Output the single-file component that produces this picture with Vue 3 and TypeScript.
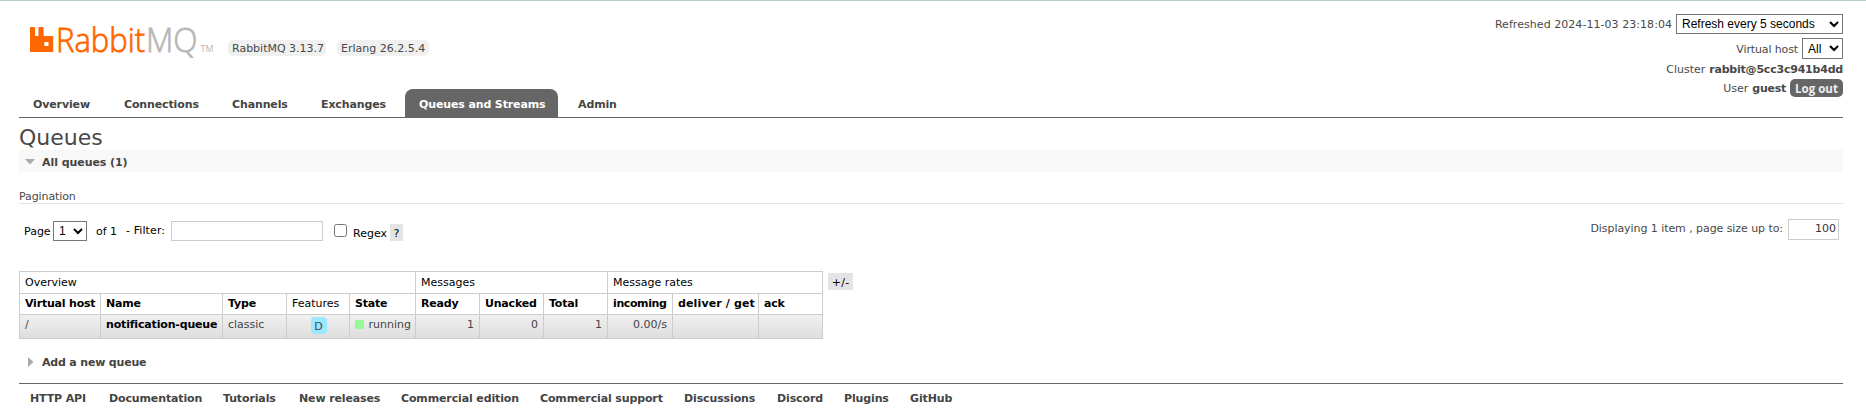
<script setup lang="ts">
import { ref } from 'vue'

interface Tab { label: string; active?: boolean }

const tabs: Tab[] = [
  { label: 'Overview' },
  { label: 'Connections' },
  { label: 'Channels' },
  { label: 'Exchanges' },
  { label: 'Queues and Streams', active: true },
  { label: 'Admin' },
]

const columns: string[] = ['Virtual host', 'Name', 'Type', 'Features', 'State', 'Ready', 'Unacked', 'Total', 'incoming', 'deliver / get', 'ack']

const footerLinks: string[] = [
  'HTTP API', 'Documentation', 'Tutorials', 'New releases', 'Commercial edition',
  'Commercial support', 'Discussions', 'Discord', 'Plugins', 'GitHub',
]

const filter = ref('')
const pageSize = ref('100')
const regex = ref(false)
</script>

<template>
  <div class="page">
    <header class="header">
      <div class="brand">
        <svg class="logo" width="190" height="60" viewBox="0 -16 190 60">
          <path class="mark" d="M.7 3H4.300q.7 0 .7.700V11.300q0 .7.700.700H7.800q.7 0 .7-.700V3.700q0-.7.700-.700H12.800q.7 0 .7.700V11.300q0 .7.700.700H22.500q.7 0 .7.700V27.300q0 .7-.7.700H.7Q0 28 0 27.300V3.700Q0 3 .7 3zM14.300 18v4h4.200v-4z" fill-rule="evenodd" />
          <text class="word rabbit" x="26" y="27.700" textLength="89" lengthAdjust="spacingAndGlyphs">Rabbit</text>
          <text class="word mq" x="116" y="27.700" textLength="51.500" lengthAdjust="spacingAndGlyphs">MQ</text>
          <text class="tm" x="170.500" y="27.700" textLength="13" lengthAdjust="spacingAndGlyphs">TM</text>
        </svg>
        <span class="pill p1">RabbitMQ 3.13.7</span>
        <span class="pill p2">Erlang 26.2.5.4</span>
      </div>
      <div class="status">
        <div class="row r1">
          <span class="t-refreshed">Refreshed 2024-11-03 23:18:04</span>
          <select class="sel-refresh"><option>Refresh every 5 seconds</option></select>
        </div>
        <div class="row r2">
          <span class="t-vhost">Virtual host</span>
          <select class="sel-vhost"><option>All</option></select>
        </div>
        <div class="row r3"><span class="t-cluster">Cluster</span><b class="t-node">rabbit@5cc3c941b4dd</b></div>
        <div class="row r4"><span class="t-user">User</span><b class="t-guest">guest</b><button class="logout">Log out</button></div>
      </div>
    </header>

    <nav class="tabs">
      <a v-for="t in tabs" :key="t.label" class="tab" :class="{ active: t.active }">{{ t.label }}</a>
    </nav>

    <h1>Queues</h1>
    <h2 class="section open">
      <svg width="10" height="6" viewBox="0 0 10 6"><path d="M0 0h10L5 5.500z" /></svg>
      <span>All queues (1)</span>
    </h2>

    <h3>Pagination</h3>
    <div class="paging">
      <div class="controls">
        <span class="t-page">Page</span>
        <select class="sel-page"><option>1</option></select>
        <span class="t-of">of 1</span>
        <span class="t-filter">- Filter:</span>
        <input v-model="filter" class="filter" type="text">
        <input v-model="regex" class="check" type="checkbox">
        <span class="t-regex">Regex</span>
        <span class="help">?</span>
      </div>
      <div class="size">
        <span class="t-size">Displaying 1 item , page size up to:</span>
        <input v-model="pageSize" class="size-input" type="text">
      </div>
    </div>

    <div class="list">
      <table>
        <colgroup><col v-for="c in columns" :key="c"></colgroup>
        <thead>
          <tr class="groups">
            <th colspan="5">Overview</th>
            <th colspan="3">Messages</th>
            <th colspan="3">Message rates</th>
          </tr>
          <tr class="names">
            <th v-for="c in columns" :key="c" :class="{ plain: c === 'Features', wide: c === 'deliver / get', tight: c === 'incoming' }">{{ c }}</th>
          </tr>
        </thead>
        <tbody>
          <tr>
            <td>/</td>
            <td><b class="queue">notification-queue</b></td>
            <td>classic</td>
            <td class="c"><span class="feature">D</span></td>
            <td><span class="state"><i></i>running</span></td>
            <td class="r">1</td>
            <td class="r">0</td>
            <td class="r">1</td>
            <td class="r rate">0.00/s</td>
            <td></td>
            <td></td>
          </tr>
        </tbody>
      </table>
      <span class="plusminus">+/-</span>
    </div>

    <h2 class="section closed">
      <svg width="6" height="10" viewBox="0 0 6 10"><path d="M0 0v10L5.500 5z" /></svg>
      <span>Add a new queue</span>
    </h2>

    <footer>
      <a v-for="l in footerLinks" :key="l">{{ l }}</a>
    </footer>
  </div>
</template>

<style>
body { margin: 0; background: #fff; }
</style>

<style scoped>
.page {
  box-sizing: border-box;
  height: 420px;
  padding: 0 23px 0 19px;
  border-top: 1px solid #b5cdc9;
  font: 11px/16px Verdana, "DejaVu Sans", sans-serif;
  color: #484848;
  white-space: nowrap;
  overflow: hidden;
}
.page * { box-sizing: border-box; }
.header { display: flex; justify-content: space-between; height: 88px; }
.brand { display: flex; align-items: flex-start; padding: 7px 0 0 11px; }
.logo { flex: none; width: 190px; margin-right: 8px; }
.mark { fill: #f60; }
.word { font: 300 33.500px "Open Sans", "Noto Sans", sans-serif; stroke-width: .8px; }
.rabbit { fill: #f60; stroke: #f60; }
.mq { fill: #b8b8b8; stroke: #b8b8b8; }
.tm { font: 9.500px "Open Sans", sans-serif; fill: #b5b5b5; }
.pill { height: 16px; margin-top: 32px; padding: 0 4px; border-radius: 5px; background: #f0f0f0; line-height: 18px; }
.p1 { width: 98px; margin-right: 11px; }
.p2 { width: 92px; }
.status { display: flex; flex-direction: column; align-items: flex-end; padding-top: 13px; }
.row { display: flex; align-items: center; gap: 4px; }
.row span, .row b { padding-top: 2px; }
.t-refreshed { letter-spacing: .05px; }
.t-vhost { letter-spacing: -.13px; }
.t-node { letter-spacing: -.21px; }
.r1 { height: 20px; margin-bottom: 4px; }
.r2 { height: 21px; margin-bottom: 2px; }
.r3 { height: 16px; margin-bottom: 2px; }
.r4 { height: 18px; }
select {
  margin: 0; padding: 0 1px; border: 1px solid #767676; border-radius: 0;
  background: #fff; color: #000; font: 12px "Liberation Sans", Arial, sans-serif;
}
.sel-refresh { width: 167px; height: 20px; }
.sel-vhost { width: 41px; height: 21px; }
.t-guest { letter-spacing: -.25px; }
.logout { width: 53px; height: 18px; padding: 1px 0 0; border: 0; border-radius: 5px; background: #666; color: #eee; font: 700 11.500px/17px "Open Sans", sans-serif; }
.tabs {
  display: grid; grid-template-columns: 85px 102px 83px 92px 153px 67px; column-gap: 6px;
  height: 29px; border-bottom: 1px solid #666;
}
.tab { height: 28px; padding: 1px 14px 0; border-radius: 8px 8px 0 0; color: #444; font-weight: bold; line-height: 30px; letter-spacing: -.13px; }
.tab.active { background: #666; color: #fff; }
h1 { height: 32px; margin: 0; font-size: 22px; font-weight: normal; line-height: 40px; }
.section { display: flex; align-items: center; height: 22px; margin: 0; font-size: 11px; color: #444; letter-spacing: -.18px; }
.section span { padding-top: 2px; }
.section svg { fill: #aaa; }
.open { padding-left: 6px; background: #f8f8f8; gap: 7px; letter-spacing: -.06px; }
.open span { padding-top: 3px; }
.open svg { margin-top: 2px; }
.closed { margin-top: 11px; padding-left: 9px; gap: 8px; }
h3 { height: 32px; margin: 0; border-bottom: 1px solid #e4e4e4; font-size: 11px; font-weight: normal; line-height: 50px; letter-spacing: -.1px; }
.paging { display: flex; justify-content: space-between; height: 67px; padding: 15px 4px 0 5px; }
.controls { display: flex; align-items: flex-start; padding-top: 2px; color: #000; }
.controls span { line-height: 20px; }
.controls .t-page, .controls .t-of { line-height: 21px; }
.t-page { width: 29px; }
.sel-page { width: 34px; height: 20px; margin-right: 9px; }
.t-of { width: 30px; }
.t-filter { width: 45px; letter-spacing: .1px; }
input[type='text'] { height: 21px; margin: 0; border: 1px solid #ccc; background: #fff; color: #333; font: 11px Verdana, "DejaVu Sans", sans-serif; }
input.filter[type='text'] { width: 152px; height: 20px; }
.check { width: 13px; height: 13px; margin: 3px 6px 0 11px; }
.t-regex { width: 37px; margin-top: 3px; }
.controls .help { width: 13px; height: 17px; margin-top: 3px; background: #e4e4e4; text-align: center; line-height: 19px; }
.size { display: flex; align-items: flex-start; gap: 5px; line-height: 20px; letter-spacing: -.065px; }
input.size-input[type='text'] { width: 51px; padding: 0 2px 2px; text-align: right; }
.list { display: flex; align-items: flex-start; height: 69px; }
table { width: 804px; table-layout: fixed; border-collapse: collapse; color: #000; }
col:nth-child(1) { width: 81px; }
col:nth-child(2) { width: 122px; }
col:nth-child(3) { width: 64px; }
col:nth-child(4) { width: 63px; }
col:nth-child(5) { width: 66px; }
col:nth-child(6), col:nth-child(7), col:nth-child(8) { width: 64px; }
col:nth-child(9) { width: 65px; }
col:nth-child(10) { width: 86px; }
col:nth-child(11) { width: 64px; }
th, td { padding: 0 4px 0 5px; border: 1px solid #ccc; text-align: left; vertical-align: top; }
th { padding-top: 1px; line-height: 20px; }
.groups { height: 22px; }
.groups th, .plain { font-weight: normal; }
.names { height: 21px; }
.names th { padding-top: 0; line-height: 20px; height: 21px; letter-spacing: -.2px; }
.names .wide { letter-spacing: .13px; }
.names .tight { letter-spacing: -.4px; }
.names .plain { letter-spacing: 0; }
tbody tr { height: 24px; background: linear-gradient(#f0f0f0, #ddd); color: #444; }
td { line-height: 19px; }
.queue { color: #000; letter-spacing: -.17px; }
.c { text-align: center; }
.r { padding-right: 5px; text-align: right; }
.feature { display: block; width: 16px; height: 17px; margin: 2px auto 0; border-radius: 4px; background: #98e8ff; line-height: 19px; }
.state { display: flex; align-items: center; gap: 5px; }
.state i { width: 9px; height: 9px; background: #98f898; }
.plusminus { width: 25px; height: 17px; margin: 2px 0 0 5px; background: #e4e4e4; color: #000; text-align: center; line-height: 19px; letter-spacing: .3px; }
footer {
  display: grid; grid-template-columns: 79px 114px 76px 102px 139px 144px 93px 67px 66px 50px;
  margin-top: 10px; padding: 7px 0 0 11px; border-top: 1px solid #666; font-weight: bold; color: #444; letter-spacing: -.13px;
}
</style>
